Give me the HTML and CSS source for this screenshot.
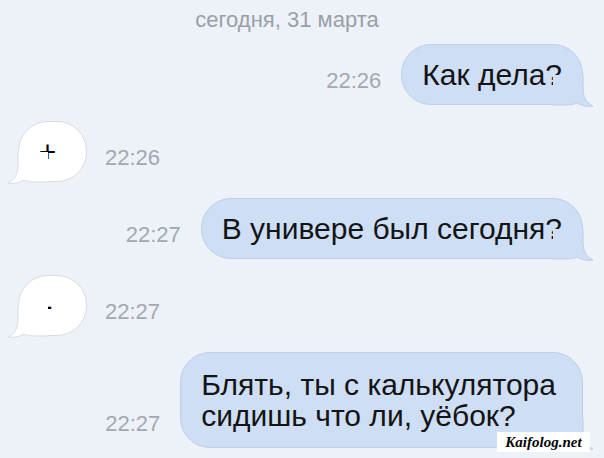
FILE: index.html
```html
<!DOCTYPE html>
<html lang="ru">
<head>
<meta charset="utf-8">
<link rel="stylesheet" href="styles.css">
</head>
<body>
<div class="chat">
  <div class="date">сегодня, 31 марта</div>

  <div class="row out first">
    <span class="time">22:26</span>
    <div class="bubble bubble-out">Как дела?
      <svg class="tail tail-out" viewBox="0 0 42 34" width="42" height="34"><path class="tail-fill" d="M30,0 L30,12 C30,21 32,27 40,31 C35,32 29,31 24,28 C20,30 15,30 0,30 L0,0 Z"/><path class="tail-line" d="M30,0 L30,12 C30,21 32,27 40,31 C35,32 29,31 24,28 C20,30 15,30 0,30"/></svg>
    </div>
  </div>

  <div class="row in">
    <div class="bubble bubble-in">+
      <svg class="tail tail-in" viewBox="0 0 42 34" width="42" height="34"><path class="tail-fill" d="M30,0 L30,12 C30,21 32,27 40,31 C35,32 29,31 24,28 C20,30 15,30 0,30 L0,0 Z"/><path class="tail-line" d="M30,0 L30,12 C30,21 32,27 40,31 C35,32 29,31 24,28 C20,30 15,30 0,30"/></svg>
    </div>
    <span class="time">22:26</span>
  </div>

  <div class="row out">
    <span class="time">22:27</span>
    <div class="bubble bubble-out">В универе был сегодня?
      <svg class="tail tail-out" viewBox="0 0 42 34" width="42" height="34"><path class="tail-fill" d="M30,0 L30,12 C30,21 32,27 40,31 C35,32 29,31 24,28 C20,30 15,30 0,30 L0,0 Z"/><path class="tail-line" d="M30,0 L30,12 C30,21 32,27 40,31 C35,32 29,31 24,28 C20,30 15,30 0,30"/></svg>
    </div>
  </div>

  <div class="row in">
    <div class="bubble bubble-in">-
      <svg class="tail tail-in" viewBox="0 0 42 34" width="42" height="34"><path class="tail-fill" d="M30,0 L30,12 C30,21 32,27 40,31 C35,32 29,31 24,28 C20,30 15,30 0,30 L0,0 Z"/><path class="tail-line" d="M30,0 L30,12 C30,21 32,27 40,31 C35,32 29,31 24,28 C20,30 15,30 0,30"/></svg>
    </div>
    <span class="time">22:27</span>
  </div>

  <div class="row out">
    <span class="time">22:27</span>
    <div class="bubble bubble-out bubble-multi">Блять, ты с калькулятора<br>сидишь что ли, уёбок?
      <svg class="tail tail-out" viewBox="0 0 42 34" width="42" height="34"><path class="tail-fill" d="M30,0 L30,12 C30,21 32,27 40,31 C35,32 29,31 24,28 C20,30 15,30 0,30 L0,0 Z"/><path class="tail-line" d="M30,0 L30,12 C30,21 32,27 40,31 C35,32 29,31 24,28 C20,30 15,30 0,30"/></svg>
    </div>
  </div>

  <div class="watermark">Kaifolog.net</div>
</div>
</body>
</html>
```

FILE: styles.css
```css
html, body {
  margin: 0;
  padding: 0;
  background: #edf1f8;
}

.chat {
  position: relative;
  width: 604px;
  height: 458px;
  overflow: hidden;
  display: flex;
  flex-direction: column;
  font-family: "Liberation Sans", Arial, sans-serif;
  color: #141414;
}

.date {
  margin-top: 6px;
  height: 28px;
  line-height: 28px;
  font-size: 22px;
  color: #9a9fa7;
  text-align: center;
  padding-right: 30px;
}

.row {
  display: flex;
  align-items: flex-end;
  gap: 20px;
  margin-top: 16px;
}

.row.first {
  margin-top: 10px;
}

.row.out {
  justify-content: flex-end;
  padding-right: 21px;
}

.row.in {
  justify-content: flex-start;
  padding-left: 18px;
  gap: 18px;
}

.time {
  font-size: 22px;
  line-height: 22px;
  color: #a3a8b0;
  margin-bottom: 13px;
}

.bubble {
  position: relative;
  font-size: 30px;
  line-height: 31px;
  padding: 14px 20px;
  border-radius: 30px;
}

.bubble-out {
  background: #cddef5;
  border: 1px solid #bccfe9;
}

.bubble-in {
  background: #ffffff;
  border: 1px solid #d9dce2;
  min-width: 27px;
  text-align: center;
  padding-left: 15px;
  padding-right: 25px;
  color: #000;
}

.bubble-multi {
  padding-top: 16px;
  padding-bottom: 16px;
  padding-right: 26px;
}

.tail {
  position: absolute;
  bottom: -5px;
  overflow: visible;
}

.tail-out {
  right: -13px;
}

.tail-in {
  left: -13px;
  transform: scaleX(-1);
}

.tail-line {
  fill: none;
  stroke-width: 1;
}

.bubble-out .tail-fill { fill: #cddef5; }
.bubble-out .tail-line { stroke: #bccfe9; }
.bubble-in .tail-fill { fill: #ffffff; }
.bubble-in .tail-line { stroke: #d9dce2; }

.watermark {
  position: absolute;
  left: 497px;
  top: 432px;
  width: 93px;
  height: 20px;
  background: #ffffff;
  font-family: "Liberation Serif", "Times New Roman", serif;
  font-weight: bold;
  font-style: italic;
  font-size: 15px;
  line-height: 20px;
  text-align: center;
  color: #000;
}
```
